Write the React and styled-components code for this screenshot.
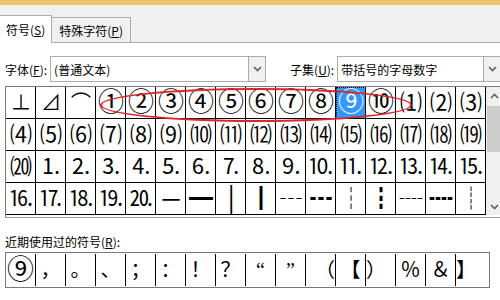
import React from "react";
import styled, { createGlobalStyle } from "styled-components";

const GlobalStyle = createGlobalStyle`
  html, body { margin: 0; padding: 0; background: #fff; overflow: hidden; }
  * { box-sizing: border-box; }
`;

const UI_FONT = `"Noto Sans CJK SC", "Microsoft YaHei", sans-serif`;
const SYM_FONT = `"Liberation Serif", "Noto Sans CJK SC", serif`;

const Dialog = styled.div`
  width: 500px;
  height: 300px;
  overflow: hidden;
  background: #fff;
  font-family: ${UI_FONT};
  font-size: 12px;
  color: #000;
`;

const TitleBand = styled.div`
  height: 5px;
  background: #efc56c;
`;

const TabStrip = styled.div`
  height: 38px;
  background: #f0f0f0;
  border-bottom: 1px solid #acacac;
  display: flex;
  align-items: flex-end;
`;

const Tab = styled.div`
  height: ${(p) => (p.$active ? "28px" : "25px")};
  padding: 0 ${(p) => (p.$active ? "6px" : "7px")};
  display: flex;
  align-items: center;
  background: ${(p) => (p.$active ? "#fff" : "#f0f0f0")};
  border: 1px solid #acacac;
  border-bottom: none;
  border-left: none;
  margin-bottom: ${(p) => (p.$active ? "-1px" : "0")};
  position: relative;
  z-index: ${(p) => (p.$active ? 1 : 0)};
  line-height: 1;
  padding-top: ${(p) => (p.$active ? "0" : "1px")};
`;

const Underline = styled.span`
  text-decoration: underline;
  text-underline-offset: 1px;
`;

const Body = styled.div`
  padding-left: 5px;
  position: relative;
`;

const FieldRow = styled.div`
  margin-top: 13px;
  height: 26px;
  display: flex;
  align-items: center;
`;

const Label = styled.span`
  margin-right: 3px;
  margin-left: ${(p) => p.$left || 0}px;
  white-space: nowrap;
`;

const Combo = styled.div`
  width: ${(p) => p.$w}px;
  flex: none;
  height: 26px;
  border: 1px solid #acacac;
  display: flex;
  align-items: stretch;
  background: #fff;
`;

const ComboText = styled.div`
  flex: 1;
  display: flex;
  align-items: center;
  padding-left: 3px;
  white-space: nowrap;
  overflow: hidden;
`;

const ComboButton = styled.div`
  width: 17px;
  flex: none;
  border-left: 1px solid #acacac;
  background: #f0f0f0;
  display: flex;
  align-items: center;
  justify-content: center;
  margin-right: ${(p) => p.$clip || 0}px;
`;

const GridFrame = styled.div`
  margin-top: 4px;
  display: flex;
  border-top: 1px solid #7a7a7a;
  border-left: 1px solid #7a7a7a;
  border-bottom: 1px solid #a0a0a0;
  padding-bottom: 2px;
  width: 520px;
  position: relative;
`;

const CellGrid = styled.div`
  display: grid;
  grid-template-columns: repeat(16, 30px);
  grid-auto-rows: 32px;
`;

const Cell = styled.div`
  border-right: 1px solid #000;
  border-bottom: 1px solid #000;
  display: flex;
  align-items: center;
  justify-content: center;
  font-family: ${SYM_FONT};
  font-size: ${(p) => p.$size}px;
  line-height: 1;
  letter-spacing: -1px;
  white-space: nowrap;
  overflow: hidden;
  background: ${(p) => (p.$selected ? "#3399ff" : "transparent")};
  color: ${(p) => (p.$selected ? "#fff" : "#000")};
  outline: ${(p) => (p.$selected ? "1px dotted #000" : "none")};
  outline-offset: -1px;
`;

const Scrollbar = styled.div`
  width: 17px;
  background: #f0f0f0;
  display: flex;
  flex-direction: column;
  align-items: stretch;
`;

const ScrollArrow = styled.div`
  height: 17px;
  display: flex;
  align-items: center;
  justify-content: center;
`;

const Thumb = styled.div`
  margin: 2px 1px 0 1px;
  height: 46px;
  background: #cdcdcd;
`;

const Track = styled.div`
  flex: 1;
`;

const Ellipse = styled.div`
  position: absolute;
  left: 94px;
  top: 1px;
  width: 312px;
  height: 34px;
  border: 2px solid #e0242b;
  border-radius: 50%;
  pointer-events: none;
`;

const RecentLabel = styled.div`
  margin-top: 15px;
  height: 16px;
  display: flex;
  align-items: center;
`;

const RecentBox = styled.div`
  margin-top: 3px;
  width: 485px;
  height: 36px;
  border: 1px solid #7a7a7a;
  display: flex;
  padding: 1px 0;
`;

const RecentCell = styled.div`
  width: 30px;
  flex: none;
  border-right: ${(p) => (p.$last ? "none" : "1px solid #000")};
  display: flex;
  align-items: center;
  justify-content: ${(p) => p.$justify || "center"};
  font-family: ${SYM_FONT};
  font-size: ${(p) => p.$size || 20}px;
  line-height: 1;
  overflow: hidden;
`;

const Chevron = ({ up }) => (
  <svg width="9" height="6" viewBox="0 0 9 6">
    <polyline
      points={up ? "1,5 4.5,1.5 8,5" : "1,1 4.5,4.5 8,1"}
      fill="none"
      stroke="#606060"
      strokeWidth="1.6"
    />
  </svg>
);

const rows = [
  ["⊥", "⊿", "⌒", "①", "②", "③", "④", "⑤", "⑥", "⑦", "⑧", "⑨", "⑩", "⑴", "⑵", "⑶"],
  ["⑷", "⑸", "⑹", "⑺", "⑻", "⑼", "⑽", "⑾", "⑿", "⒀", "⒁", "⒂", "⒃", "⒄", "⒅", "⒆"],
  ["⒇", "⒈", "⒉", "⒊", "⒋", "⒌", "⒍", "⒎", "⒏", "⒐", "⒑", "⒒", "⒓", "⒔", "⒕", "⒖"],
  ["⒗", "⒘", "⒙", "⒚", "⒛", "─", "━", "│", "┃", "┄", "┅", "┆", "┇", "┈", "┉", "┊"],
];

const sizeFor = (c) => {
  const code = c.codePointAt(0);
  if (code >= 0x2460 && code <= 0x2473) return 26;
  if (code >= 0x2474 && code <= 0x2487) return 22;
  if (code >= 0x2500) return 24;
  if (code < 0x2460) return 20;
  return 22;
};

const recent = [
  { c: "⑨", size: 27 },
  { c: "，" },
  { c: "。" },
  { c: "、" },
  { c: "；" },
  { c: "：" },
  { c: "！" },
  { c: "？" },
  { c: "“" },
  { c: "”" },
  { c: "（", justify: "flex-end" },
  { c: "【" },
  { c: "）", justify: "flex-start" },
  { c: "％" },
  { c: "＆" },
  { c: "】", justify: "flex-start" },
];

export default function App() {
  return (
    <Dialog>
      <GlobalStyle />
      <TitleBand />
      <TabStrip>
        <Tab $active>
          符号(<Underline>S</Underline>)
        </Tab>
        <Tab>
          特殊字符(<Underline>P</Underline>)
        </Tab>
      </TabStrip>
      <Body>
        <FieldRow>
          <Label>
            字体(<Underline>F</Underline>):
          </Label>
          <Combo $w={216}>
            <ComboText>(普通文本)</ComboText>
            <ComboButton>
              <Chevron />
            </ComboButton>
          </Combo>
          <Label $left={24}>
            子集(<Underline>U</Underline>):
          </Label>
          <Combo $w={180}>
            <ComboText>带括号的字母数字</ComboText>
            <ComboButton $clip={16}>
              <Chevron />
            </ComboButton>
          </Combo>
        </FieldRow>
        <GridFrame>
          <CellGrid>
            {rows.map((r, ri) =>
              r.map((c, ci) => (
                <Cell key={`${ri}-${ci}`} $selected={ri === 0 && ci === 11} $size={sizeFor(c)}>
                  {c}
                </Cell>
              ))
            )}
          </CellGrid>
          <Scrollbar>
            <ScrollArrow>
              <Chevron up />
            </ScrollArrow>
            <Thumb />
            <Track />
            <ScrollArrow>
              <Chevron />
            </ScrollArrow>
          </Scrollbar>
          <Ellipse />
        </GridFrame>
        <RecentLabel>
          近期使用过的符号(<Underline>R</Underline>):
        </RecentLabel>
        <RecentBox>
          {recent.map((r, i) => (
            <RecentCell key={i} $size={r.size} $justify={r.justify} $last={i === recent.length - 1}>
              {r.c}
            </RecentCell>
          ))}
        </RecentBox>
      </Body>
    </Dialog>
  );
}
